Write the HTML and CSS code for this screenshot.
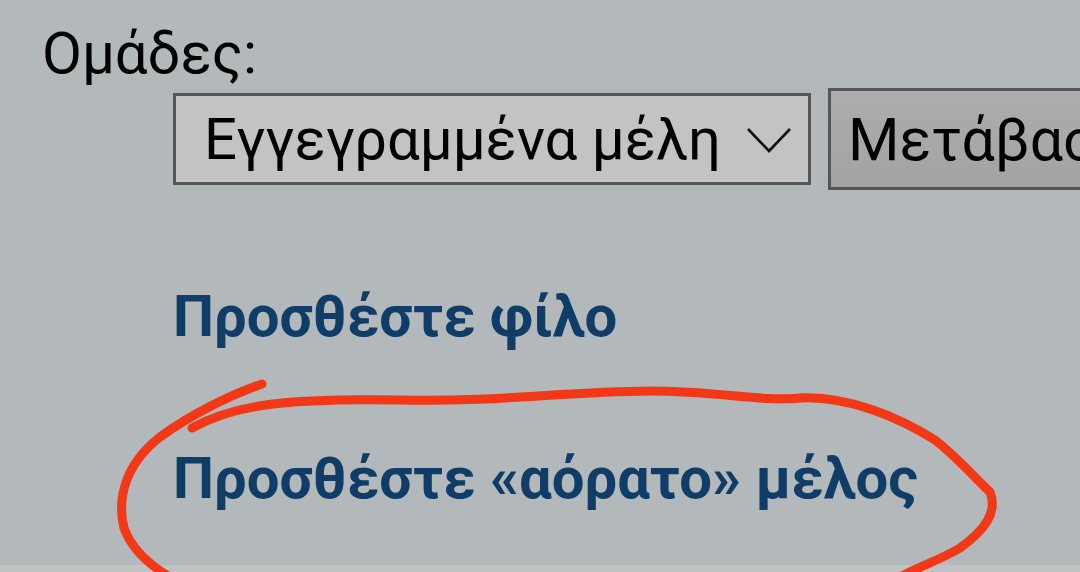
FILE: index.html
```html
<!DOCTYPE html>
<html>
    <head>
        <title>Ομάδες</title>
        <link rel="stylesheet" href="styles.css">
    </head>
    <body>
        <div class="page">
            <div class="label">Ομάδες:</div>

            <div class="group_row">
                <div class="select_box">
                    <span>Εγγεγραμμένα μέλη</span>
                    <svg class="chevron" width="46" height="26" viewBox="0 0 46 26">
                        <polyline points="2,2 23,24 44,2" fill="none" stroke="#111" stroke-width="2.6"/>
                    </svg>
                </div>
                <button class="go_button">Μετάβαση</button>
            </div>

            <div class="links">
                <a class="link" href="#">Προσθέστε φίλο</a>
                <a class="link" href="#">Προσθέστε «αόρατο» μέλος</a>
            </div>
        </div>

        <!-- hand drawn circle round the second link -->
        <svg class="scribble" width="1080" height="572" viewBox="0 0 1080 572">
            <path d="M 262 384 C 230 395, 190 415, 160 437 C 128 462, 116 495, 124 528 C 132 550, 150 565, 168 576
                     M 192 428 C 235 404, 290 398, 400 400 C 500 402, 560 392, 650 391 C 720 391, 760 402, 800 398 C 850 396, 900 418, 935 440 C 958 458, 975 478, 990 492 C 998 512, 985 530, 960 548 C 940 560, 920 566, 902 576"
                  fill="none" stroke="#f23816" stroke-width="9" stroke-linecap="round" stroke-linejoin="round"/>
        </svg>
    </body>
</html>
```

FILE: styles.css
```css
html {
    background-color: #c1c2c2;
}
body {
    margin: 0;
    font-family: Roboto, "Noto Sans", sans-serif;
    overflow: hidden;
}
.page {
    box-sizing: border-box;
    height: 565px;
    padding: 19px 0 0 42px;
    background-color: #b3b8ba;
}
.label {
    font-size: 58px;
    line-height: 68px;
    color: #000;
}
.group_row {
    display: flex;
    align-items: center;
    gap: 17px;
    margin-left: 131px;
    margin-top: 1px;
    width: 1200px;
}
.select_box {
    box-sizing: border-box;
    display: flex;
    align-items: center;
    justify-content: space-between;
    width: 638px;
    height: 92px;
    padding: 0 16px 0 28px;
    border: 3px solid #555;
    background-color: #c3c3c3;
    font-size: 58px;
    color: #000;
}
.chevron {
    margin-top: 2px;
}
.go_button {
    box-sizing: border-box;
    height: 102px;
    width: 400px;
    padding: 0 0 0 17px;
    text-align: left;
    border: 3px solid #555;
    background: linear-gradient(#adadad, #a3a3a3);
    font-family: Roboto, "Noto Sans", sans-serif;
    font-size: 59px;
    color: #000;
}
.links {
    display: flex;
    flex-direction: column;
    align-items: flex-start;
    gap: 94px;
    margin: 92px 0 0 131px;
}
.link {
    font-size: 58px;
    font-weight: bold;
    line-height: 68px;
    color: #0f3d67;
    text-decoration: none;
}
.scribble {
    position: absolute;
    top: 0;
    left: 0;
    pointer-events: none;
}
```
